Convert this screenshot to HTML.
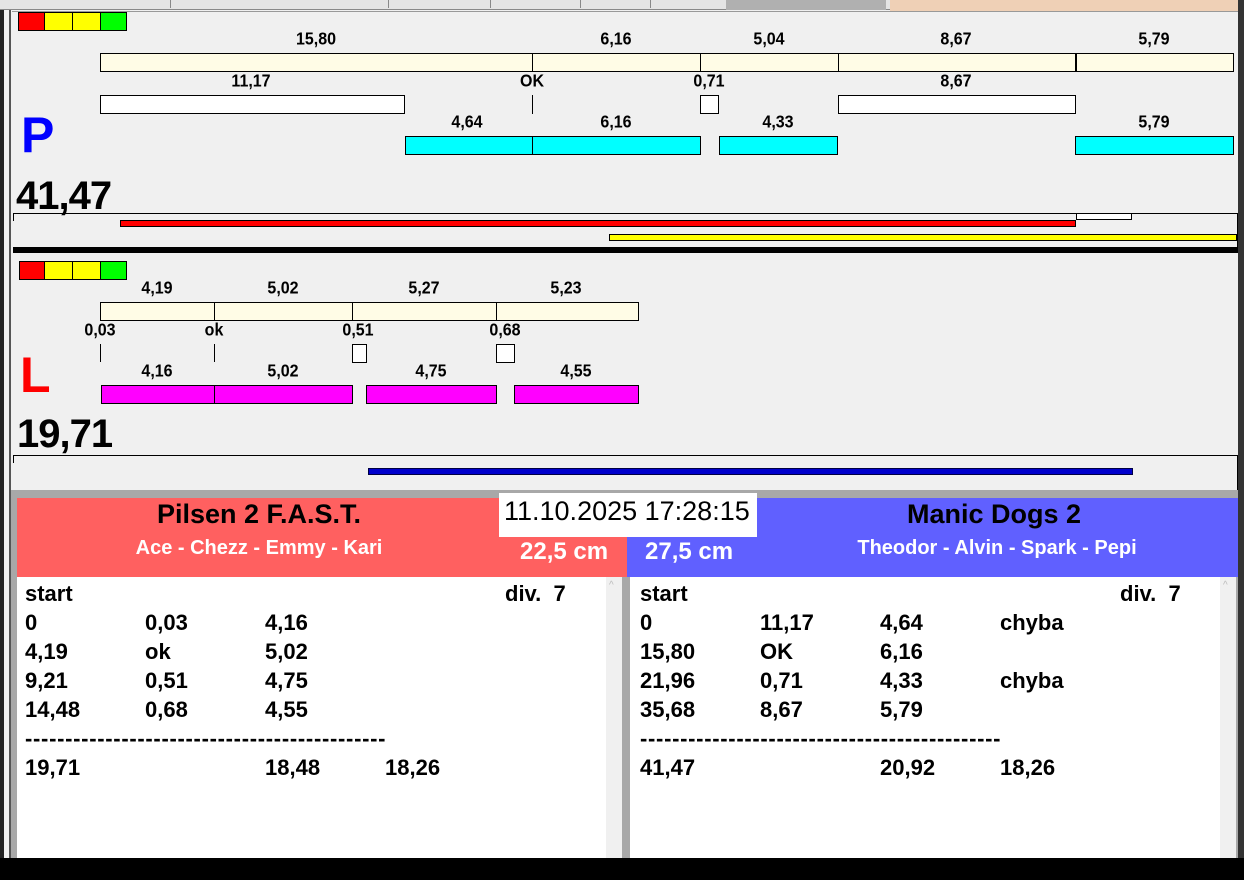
<!DOCTYPE html>
<html><head><meta charset="utf-8"><style>
*{margin:0;padding:0;box-sizing:border-box}
body{width:1244px;height:880px;overflow:hidden;background:#f0f0f0;position:relative;font-family:"Liberation Sans",Arial,sans-serif}
div{position:absolute}
.b{border:1px solid #000}
.lb{font-weight:bold;font-size:16px;transform:translateX(-50%) scaleY(1.1);white-space:nowrap;line-height:18px}
.t{font-weight:bold;font-size:22px;line-height:29px;white-space:nowrap}
.vt{width:1px;background:#000}
</style></head><body>
<!-- frame -->
<div style="left:0;top:0;width:4px;height:880px;background:#222"></div>
<div style="left:9px;top:10px;width:2px;height:850px;background:#555"></div>
<div style="left:0;top:0;width:890px;height:10px;background:#e4e4e4;border-bottom:1px solid #888"></div>
<div style="left:170px;top:0;width:1px;height:8px;background:#888"></div>
<div style="left:388px;top:0;width:1px;height:8px;background:#888"></div>
<div style="left:490px;top:0;width:1px;height:8px;background:#888"></div>
<div style="left:580px;top:0;width:1px;height:8px;background:#888"></div>
<div style="left:650px;top:0;width:1px;height:8px;background:#888"></div>
<div style="left:726px;top:0;width:160px;height:10px;background:#b0b0b0"></div>
<div style="left:890px;top:0;width:350px;height:12px;background:#efd0b6"></div>
<div style="left:1238px;top:0;width:6px;height:880px;background:#333"></div>
<div style="left:12px;top:11px;width:1226px;height:1px;background:#999"></div>

<!-- top panel -->
<div class="b" style="left:18px;top:12px;width:27px;height:19px;background:#f00"></div>
<div class="b" style="left:44px;top:12px;width:29px;height:19px;background:#ff0"></div>
<div class="b" style="left:72px;top:12px;width:29px;height:19px;background:#ff0"></div>
<div class="b" style="left:100px;top:12px;width:27px;height:19px;background:#0f0"></div>

<div class="lb" style="left:316px;top:31px">15,80</div>
<div class="lb" style="left:616px;top:31px">6,16</div>
<div class="lb" style="left:769px;top:31px">5,04</div>
<div class="lb" style="left:956px;top:31px">8,67</div>
<div class="lb" style="left:1154px;top:31px">5,79</div>
<div class="b" style="left:100px;top:53px;width:1134px;height:19px;background:#fffce6"></div>
<div class="vt" style="left:532px;top:53px;height:19px"></div>
<div class="vt" style="left:700px;top:53px;height:19px"></div>
<div class="vt" style="left:838px;top:53px;height:19px"></div>
<div class="vt" style="left:1075px;top:53px;height:19px;width:2px"></div>

<div class="lb" style="left:251px;top:73px">11,17</div>
<div class="lb" style="left:532px;top:73px">OK</div>
<div class="lb" style="left:709px;top:73px">0,71</div>
<div class="lb" style="left:956px;top:73px">8,67</div>
<div class="b" style="left:100px;top:95px;width:305px;height:19px;background:#fff"></div>
<div class="vt" style="left:532px;top:95px;height:19px"></div>
<div class="b" style="left:700px;top:95px;width:19px;height:19px;background:#fff"></div>
<div class="b" style="left:838px;top:95px;width:238px;height:19px;background:#fff"></div>

<div class="lb" style="left:467px;top:114px">4,64</div>
<div class="lb" style="left:616px;top:114px">6,16</div>
<div class="lb" style="left:778px;top:114px">4,33</div>
<div class="lb" style="left:1154px;top:114px">5,79</div>
<div class="b" style="left:405px;top:136px;width:296px;height:19px;background:#0ff"></div>
<div class="vt" style="left:532px;top:136px;height:19px"></div>
<div class="b" style="left:719px;top:136px;width:119px;height:19px;background:#0ff"></div>
<div class="b" style="left:1075px;top:136px;width:159px;height:19px;background:#0ff"></div>

<div style="left:21px;top:106px;font-weight:bold;font-size:50px;color:#00f;line-height:58px">P</div>
<div style="left:16px;top:174px;font-weight:bold;font-size:40px;line-height:44px;letter-spacing:-1px">41,47</div>

<div style="left:13px;top:213px;width:1225px;height:1px;background:#000"></div>
<div style="left:13px;top:213px;width:1px;height:8px;background:#000"></div>
<div style="left:1237px;top:213px;width:1px;height:35px;background:#000"></div>
<div class="b" style="left:120px;top:220px;width:956px;height:7px;background:#f00"></div>
<div class="b" style="left:1076px;top:213px;width:56px;height:7px;background:#fff"></div>
<div class="b" style="left:609px;top:234px;width:628px;height:7px;background:#ff0"></div>
<div style="left:13px;top:247px;width:1225px;height:6px;background:#000"></div>

<!-- second panel -->
<div class="b" style="left:19px;top:261px;width:26px;height:19px;background:#f00"></div>
<div class="b" style="left:44px;top:261px;width:29px;height:19px;background:#ff0"></div>
<div class="b" style="left:72px;top:261px;width:29px;height:19px;background:#ff0"></div>
<div class="b" style="left:100px;top:261px;width:27px;height:19px;background:#0f0"></div>

<div class="lb" style="left:157px;top:280px">4,19</div>
<div class="lb" style="left:283px;top:280px">5,02</div>
<div class="lb" style="left:424px;top:280px">5,27</div>
<div class="lb" style="left:566px;top:280px">5,23</div>
<div class="b" style="left:100px;top:302px;width:539px;height:19px;background:#fffce6"></div>
<div class="vt" style="left:214px;top:302px;height:19px"></div>
<div class="vt" style="left:352px;top:302px;height:19px"></div>
<div class="vt" style="left:496px;top:302px;height:19px"></div>

<div class="lb" style="left:100px;top:322px">0,03</div>
<div class="lb" style="left:214px;top:322px">ok</div>
<div class="lb" style="left:358px;top:322px">0,51</div>
<div class="lb" style="left:505px;top:322px">0,68</div>
<div class="vt" style="left:100px;top:344px;height:18px"></div>
<div class="vt" style="left:214px;top:344px;height:18px"></div>
<div class="b" style="left:352px;top:344px;width:15px;height:19px;background:#fff"></div>
<div class="b" style="left:496px;top:344px;width:19px;height:19px;background:#fff"></div>

<div class="lb" style="left:157px;top:363px">4,16</div>
<div class="lb" style="left:283px;top:363px">5,02</div>
<div class="lb" style="left:431px;top:363px">4,75</div>
<div class="lb" style="left:576px;top:363px">4,55</div>
<div class="b" style="left:101px;top:385px;width:252px;height:19px;background:#f0f"></div>
<div class="vt" style="left:214px;top:385px;height:19px"></div>
<div class="b" style="left:366px;top:385px;width:131px;height:19px;background:#f0f"></div>
<div class="b" style="left:514px;top:385px;width:125px;height:19px;background:#f0f"></div>

<div style="left:20px;top:346px;font-weight:bold;font-size:50px;color:#f00;line-height:58px">L</div>
<div style="left:17px;top:412px;font-weight:bold;font-size:40px;line-height:44px;letter-spacing:-1px">19,71</div>

<div style="left:13px;top:455px;width:1225px;height:1px;background:#000"></div>
<div style="left:13px;top:455px;width:1px;height:8px;background:#000"></div>
<div style="left:1237px;top:455px;width:1px;height:35px;background:#000"></div>
<div style="left:368px;top:468px;width:765px;height:7px;background:#00c;border:1px solid #004"></div>

<!-- bottom -->
<div style="left:11px;top:490px;width:1227px;height:370px;background:#a8a8a8"></div>
<div style="left:17px;top:498px;width:610px;height:79px;background:#ff6060"></div>
<div style="left:627px;top:498px;width:611px;height:79px;background:#6060ff"></div>
<div style="left:499px;top:493px;width:258px;height:44px;background:#fff;font-size:27px;line-height:36px;padding-left:5px;white-space:nowrap">11.10.2025 17:28:15</div>
<div style="left:259px;top:499px;transform:translateX(-50%);font-weight:bold;font-size:27px;white-space:nowrap">Pilsen 2 F.A.S.T.</div>
<div style="left:259px;top:537px;transform:translateX(-50%);font-weight:bold;font-size:20px;color:#fff;white-space:nowrap">Ace - Chezz - Emmy - Kari</div>
<div style="left:520px;top:538px;font-weight:bold;font-size:24px;color:#fff;white-space:nowrap">22,5 cm</div>
<div style="left:994px;top:499px;transform:translateX(-50%);font-weight:bold;font-size:27px;white-space:nowrap">Manic Dogs 2</div>
<div style="left:997px;top:537px;transform:translateX(-50%);font-weight:bold;font-size:20px;color:#fff;white-space:nowrap">Theodor - Alvin - Spark - Pepi</div>
<div style="left:645px;top:538px;font-weight:bold;font-size:24px;color:#fff;white-space:nowrap">27,5 cm</div>

<div style="left:17px;top:577px;width:589px;height:283px;background:#fff"></div>
<div style="left:606px;top:577px;width:16px;height:283px;background:#f0f0f0"></div>
<div style="left:630px;top:577px;width:590px;height:283px;background:#fff"></div>
<div style="left:1220px;top:577px;width:16px;height:283px;background:#f0f0f0"></div>
<div style="left:609px;top:580px;font-size:10px;color:#bbb">^</div>
<div style="left:1223px;top:580px;font-size:10px;color:#bbb">^</div>

<div class="t" style="left:25px;top:579px">start</div>
<div class="t" style="left:505px;top:579px">div.&nbsp; 7</div>
<div class="t" style="left:25px;top:608px">0<br>4,19<br>9,21<br>14,48</div>
<div class="t" style="left:145px;top:608px">0,03<br>ok<br>0,51<br>0,68</div>
<div class="t" style="left:265px;top:608px">4,16<br>5,02<br>4,75<br>4,55</div>
<div class="t" style="left:25px;top:724px;letter-spacing:0.7px">---------------------------------------------</div>
<div class="t" style="left:25px;top:753px">19,71</div>
<div class="t" style="left:265px;top:753px">18,48</div>
<div class="t" style="left:385px;top:753px">18,26</div>

<div class="t" style="left:640px;top:579px">start</div>
<div class="t" style="left:1120px;top:579px">div.&nbsp; 7</div>
<div class="t" style="left:640px;top:608px">0<br>15,80<br>21,96<br>35,68</div>
<div class="t" style="left:760px;top:608px">11,17<br>OK<br>0,71<br>8,67</div>
<div class="t" style="left:880px;top:608px">4,64<br>6,16<br>4,33<br>5,79</div>
<div class="t" style="left:1000px;top:608px">chyba<br><br>chyba</div>
<div class="t" style="left:640px;top:724px;letter-spacing:0.7px">---------------------------------------------</div>
<div class="t" style="left:640px;top:753px">41,47</div>
<div class="t" style="left:880px;top:753px">20,92</div>
<div class="t" style="left:1000px;top:753px">18,26</div>

<div style="left:0;top:858px;width:1244px;height:22px;background:#000"></div>
</body></html>
